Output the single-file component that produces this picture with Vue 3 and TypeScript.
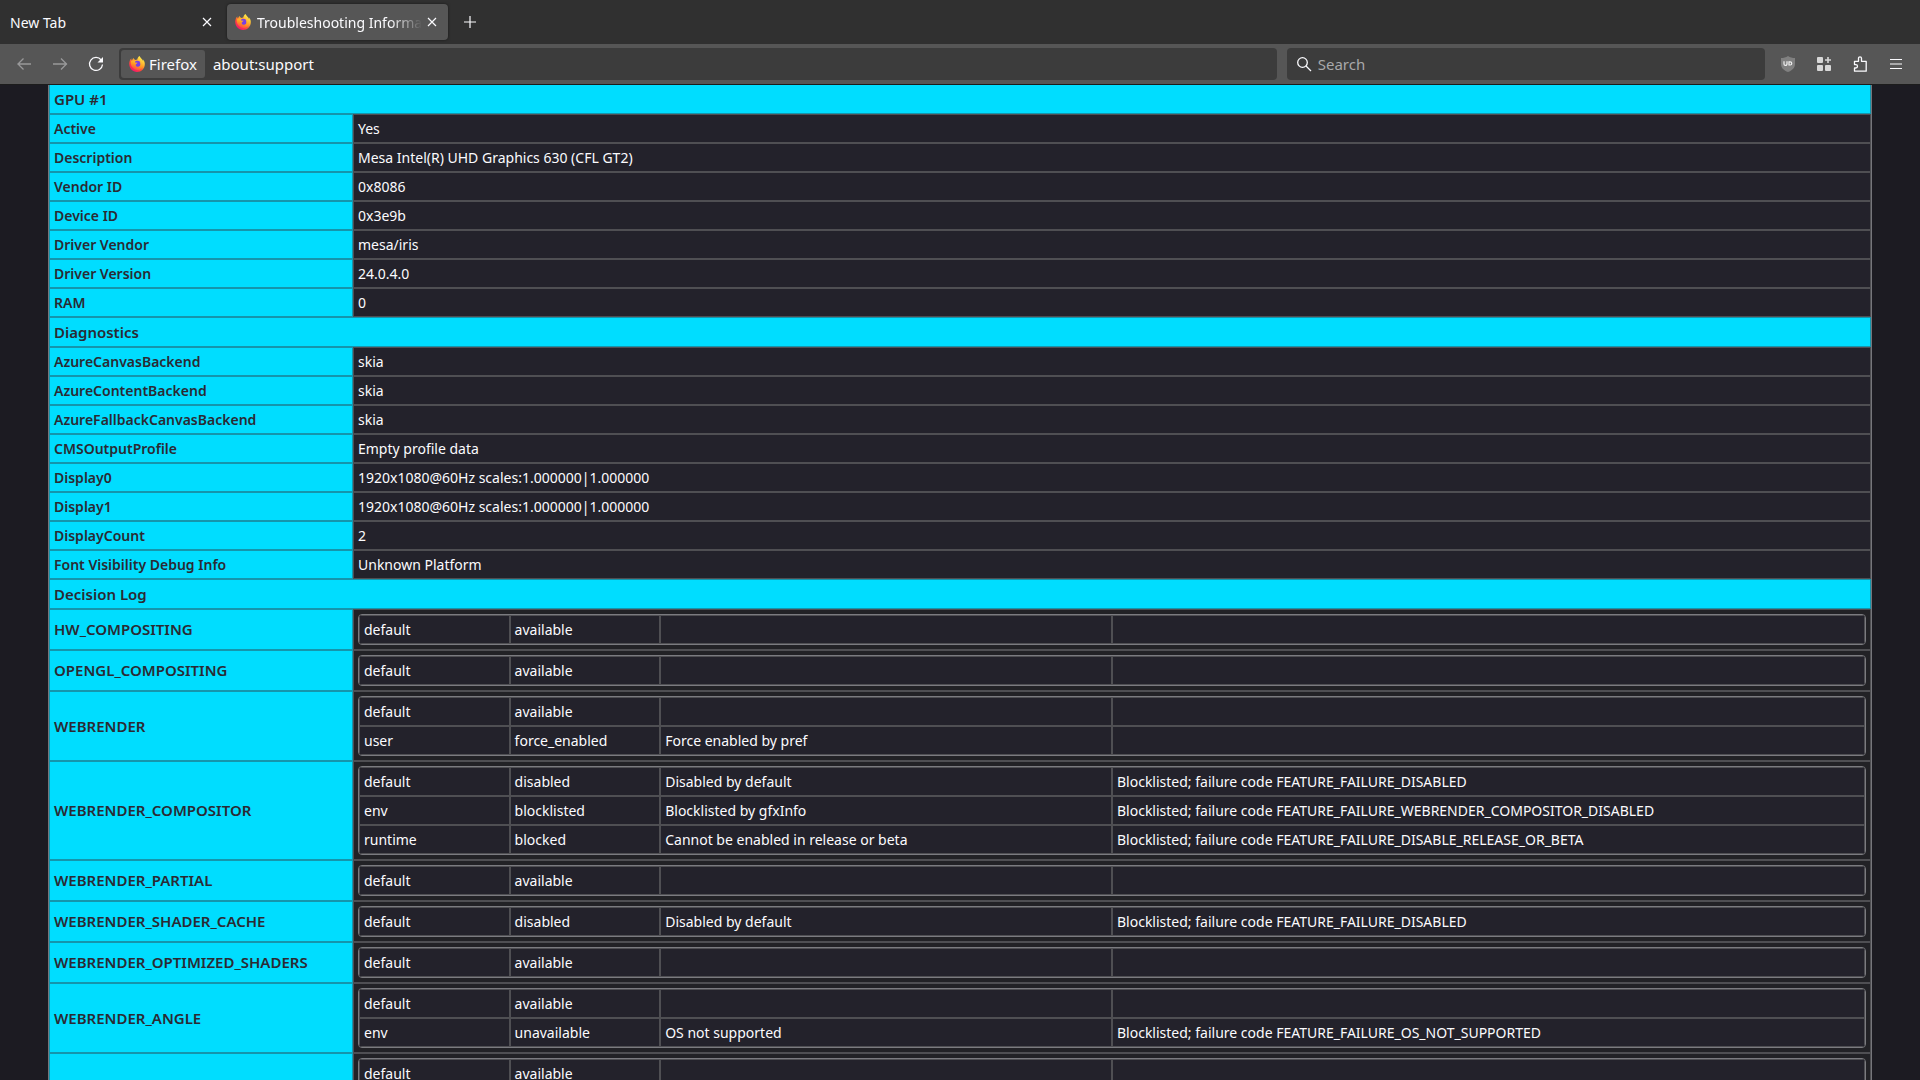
<script setup lang="ts">
type Row = [string, string]
type Entry = [string, string, string, string]
type Decision = { name: string; log: Entry[] }

const gpu: Row[] = [
  ['Active', 'Yes'],
  ['Description', 'Mesa Intel(R) UHD Graphics 630 (CFL GT2)'],
  ['Vendor ID', '0x8086'],
  ['Device ID', '0x3e9b'],
  ['Driver Vendor', 'mesa/iris'],
  ['Driver Version', '24.0.4.0'],
  ['RAM', '0'],
]

const diagnostics: Row[] = [
  ['AzureCanvasBackend', 'skia'],
  ['AzureContentBackend', 'skia'],
  ['AzureFallbackCanvasBackend', 'skia'],
  ['CMSOutputProfile', 'Empty profile data'],
  ['Display0', '1920x1080@60Hz scales:1.000000|1.000000'],
  ['Display1', '1920x1080@60Hz scales:1.000000|1.000000'],
  ['DisplayCount', '2'],
  ['Font Visibility Debug Info', 'Unknown Platform'],
]

const available: Entry = ['default', 'available', '', '']
const disabled: Entry = [
  'default',
  'disabled',
  'Disabled by default',
  'Blocklisted; failure code FEATURE_FAILURE_DISABLED',
]

const decisions: Decision[] = [
  { name: 'HW_COMPOSITING', log: [available] },
  { name: 'OPENGL_COMPOSITING', log: [available] },
  { name: 'WEBRENDER', log: [available, ['user', 'force_enabled', 'Force enabled by pref', '']] },
  {
    name: 'WEBRENDER_COMPOSITOR',
    log: [
      disabled,
      ['env', 'blocklisted', 'Blocklisted by gfxInfo', 'Blocklisted; failure code FEATURE_FAILURE_WEBRENDER_COMPOSITOR_DISABLED'],
      ['runtime', 'blocked', 'Cannot be enabled in release or beta', 'Blocklisted; failure code FEATURE_FAILURE_DISABLE_RELEASE_OR_BETA'],
    ],
  },
  { name: 'WEBRENDER_PARTIAL', log: [available] },
  { name: 'WEBRENDER_SHADER_CACHE', log: [disabled] },
  { name: 'WEBRENDER_OPTIMIZED_SHADERS', log: [available] },
  {
    name: 'WEBRENDER_ANGLE',
    log: [available, ['env', 'unavailable', 'OS not supported', 'Blocklisted; failure code FEATURE_FAILURE_OS_NOT_SUPPORTED']],
  },
  { name: '', log: [available, ['', '', '', ''], ['', '', '', '']] },
]
</script>

<template>
  <div class="window">
    <svg class="defs" width="0" height="0" aria-hidden="true">
      <defs>
        <linearGradient id="flame" x1="0.85" y1="0.1" x2="0.25" y2="0.95">
          <stop offset="0" stop-color="#fff44f" />
          <stop offset="0.35" stop-color="#ffb02e" />
          <stop offset="0.65" stop-color="#ff4f36" />
          <stop offset="1" stop-color="#f5156c" />
        </linearGradient>
        <linearGradient id="tail" x1="0.8" y1="0" x2="0.3" y2="1">
          <stop offset="0" stop-color="#ffd43a" />
          <stop offset="0.5" stop-color="#ff9a1f" />
          <stop offset="1" stop-color="#ff3d4c" />
        </linearGradient>
        <symbol id="firefox" viewBox="0 0 16 16">
          <path fill="url(#flame)" d="M15.3 5.6c-.3-.9-1-1.700-1.600-2 .4.700.6 1.500.700 2C13.400 3.100 11.700 2.300 10.500 0 9 .9 8.400 2.600 8.300 3.500c-.7 0-1.300.2-1.900.5-.9-.3-1.600-1-1.800-1.900-.9.500-1.200 1.300-1.300 1.900-.3 0-.6.1-.9.200 0-.5-.1-1 .1-1.700C1.100 3.200.3 5.600.2 7.600.100 12.200 3.600 16 8 16s7.800-3.500 7.800-8c0-.9-.1-1.700-.5-2.400z" />
          <circle cx="8.200" cy="8" r="3.300" fill="#7a3fe4" />
          <path fill="url(#tail)" d="M1.900 5.200c1.200-1 2.700-.9 3.500-.4.600-.3 1.200-.4 1.900-.3-.9.500-1.300 1.100-1.300 2l2.500.3c-.2 1-1.700 1.100-1.800 1.900-.2 1.500 1.600 2.500 3.200 1.900 2.300-.9 2.200-3.600.5-4.900 2.300.5 3.400 2.500 3.200 4.200-.3 2.600-2.600 4.200-5.200 4C4.300 13.600 1 10 1.900 5.200z" />
        </symbol>
      </defs>
    </svg>

    <nav class="tabs" aria-label="Tabs">
      <div class="tab first">
        <span class="label">New Tab</span>
        <button class="close" aria-label="Close New Tab">
          <svg viewBox="0 0 10 10"><path d="M1 1l8 8M9 1l-8 8" /></svg>
        </button>
      </div>
      <div class="tab selected">
        <svg class="fox"><use href="#firefox" /></svg>
        <span class="label faded">Troubleshooting Information</span>
        <button class="close" aria-label="Close Troubleshooting Information">
          <svg viewBox="0 0 10 10"><path d="M1 1l8 8M9 1l-8 8" /></svg>
        </button>
      </div>
      <button class="add" aria-label="Open a new tab">
        <svg viewBox="0 0 12 12"><path d="M6 0v12M0 6h12" /></svg>
      </button>
    </nav>

    <header class="toolbar">
      <button class="tool dim" aria-label="Back">
        <svg viewBox="0 0 16 16"><path d="M15 8H1.500M7.500 2.500L2 8l5.500 5.500" /></svg>
      </button>
      <button class="tool dim" aria-label="Forward">
        <svg viewBox="0 0 16 16"><path d="M1 8h14M9 2.500L14.500 8 9 13.500" /></svg>
      </button>
      <button class="tool reload" aria-label="Reload">
        <svg viewBox="0 0 16 16">
          <path d="M13.200 4A6.500 6.500 0 1 0 14.500 8.500" />
          <path class="solid" d="M15 1v5.500H9.500z" />
        </svg>
      </button>
      <div class="urlbar">
        <button class="identity"><svg class="fox"><use href="#firefox" /></svg>Firefox</button>
        <input class="url" type="text" value="about:support" aria-label="Address" />
      </div>
      <label class="search">
        <svg viewBox="0 0 16 16"><circle cx="6.500" cy="6.500" r="4.800" /><path d="M10 10l5 5" /></svg>
        <input type="text" placeholder="Search" aria-label="Search" />
      </label>
      <div class="actions">
        <button class="action" aria-label="uBlock Origin">
          <svg viewBox="0 0 16 16">
            <path fill="#808080" d="M8 0c2 1.400 4.500 2 7 2v6c0 4-3 6.500-7 8-4-1.500-7-4-7-8V2c2.500 0 5-.6 7-2z" />
            <path fill="none" stroke="#f0f0f0" stroke-width="1.200" d="M4 5.300v2.600a1.500 1.500 0 0 0 3 0V5.300M9 5.900v3.100h1.200a1.500 1.500 0 0 0 0-3.100z" />
          </svg>
        </button>
        <button class="action" aria-label="Add-ons">
          <svg viewBox="0 0 16 16" fill="#d8d8d8">
            <rect x="1" y="1" width="6" height="6" rx="1" /><rect x="1" y="9" width="6" height="6" rx="1" />
            <rect x="9" y="9" width="6" height="6" rx="1" /><path d="M11.200 1h1.600v2.200H15v1.600h-2.200V7h-1.600V4.800H9V3.200h2.200z" />
          </svg>
        </button>
        <button class="action" aria-label="Extensions">
          <svg viewBox="0 0 16 16">
            <path fill="none" stroke="#fbfbfe" stroke-width="1.300" stroke-linejoin="round" d="M2.500 7V5.300h4V2.300a1.500 1.500 0 0 1 3 0v3h4.700v9.900H2.500v-3.200h1.300a1.700 1.700 0 0 0 0-3.400H2.500z" />
          </svg>
        </button>
        <button class="action" aria-label="Menu">
          <svg viewBox="0 0 16 16"><path fill="none" stroke="#fbfbfe" stroke-width="1.200" d="M2 3.500h12M2 8h12M2 12.500h12" /></svg>
        </button>
      </div>
    </header>

    <main class="page">
      <table class="report">
        <tbody>
          <tr class="top"><th colspan="2" class="section">GPU #1</th></tr>
          <tr v-for="[name, value] in gpu" :key="name">
            <th scope="row">{{ name }}</th>
            <td>{{ value }}</td>
          </tr>
          <tr><th colspan="2" class="section">Diagnostics</th></tr>
          <tr v-for="[name, value] in diagnostics" :key="name">
            <th scope="row">{{ name }}</th>
            <td>{{ value }}</td>
          </tr>
          <tr><th colspan="2" class="section">Decision Log</th></tr>
          <tr v-for="d in decisions" :key="d.name">
            <th scope="row" class="feature">{{ d.name }}</th>
            <td class="holder">
              <table class="log">
                <tbody>
                  <tr v-for="(entry, i) in d.log" :key="i">
                    <td v-for="(cell, j) in entry" :key="j">{{ cell }}</td>
                  </tr>
                </tbody>
              </table>
            </td>
          </tr>
        </tbody>
      </table>
    </main>
  </div>
</template>

<style>
body {
  margin: 0;
  background: #1c1b22;
}
</style>

<style scoped>
.window {
  height: 100vh;
  overflow: hidden;
  display: flex;
  flex-direction: column;
  color: #fbfbfe;
  font-family: "Noto Sans", sans-serif;
  font-size: 14px;
}
.defs {
  position: absolute;
}
button,
input {
  font: inherit;
  color: inherit;
  background: none;
  border: 0;
  padding: 0;
  margin: 0;
  outline: 0;
}
button {
  display: flex;
  align-items: center;
  justify-content: center;
}
.fox {
  width: 16px;
  height: 16px;
  flex: none;
}

.tabs {
  flex: none;
  height: 44px;
  display: flex;
  align-items: center;
  background: #303030;
}
.tab {
  box-sizing: border-box;
  width: 221px;
  height: 36px;
  display: flex;
  align-items: center;
  border-radius: 4px;
  padding: 0 6px 0 8px;
}
.tab.first {
  width: 227px;
  padding: 0 10px;
}
.tab.selected {
  background: #565656;
  box-shadow: 0 0 3px rgba(0, 0, 0, 0.5);
}
.selected .fox {
  margin-right: 6px;
}
.label {
  flex: 1;
  min-width: 0;
  overflow: hidden;
  white-space: nowrap;
}
.faded {
  mask-image: linear-gradient(to left, transparent, #000 32px);
}
.close {
  width: 20px;
  height: 20px;
}
.close svg {
  width: 10px;
  height: 10px;
  stroke: #fbfbfe;
  stroke-width: 1.200;
}
.add {
  width: 44px;
  height: 36px;
}
.add svg {
  width: 12px;
  height: 12px;
  stroke: #fbfbfe;
  stroke-width: 1.200;
}

.toolbar {
  box-sizing: border-box;
  flex: none;
  height: 41px;
  display: flex;
  align-items: center;
  padding: 0 6px;
  font-size: 15px;
  background: #565656;
  border-bottom: 1px solid #1c1c1c;
}
.tool {
  width: 36px;
  height: 32px;
}
.tool svg {
  width: 16px;
  height: 16px;
  fill: none;
  stroke: #fbfbfe;
  stroke-width: 1.300;
}
.tool .solid {
  fill: #fbfbfe;
  stroke: none;
}
.dim {
  opacity: 0.4;
}
.urlbar,
.search {
  box-sizing: border-box;
  height: 32px;
  display: flex;
  align-items: center;
  background: #3c3c3c;
  border-radius: 4px;
}
.urlbar {
  flex: 1153;
  margin-left: 5px;
  padding: 2px;
}
.identity {
  height: 28px;
  gap: 4px;
  padding: 0 8px;
  background: #565656;
  border-radius: 3px;
}
.url {
  flex: 1;
  min-width: 0;
  margin-left: 8px;
}
.search {
  flex: 469;
  margin: 0 5px 0 10px;
  padding-left: 9px;
  gap: 6px;
}
.search svg {
  width: 16px;
  height: 16px;
  fill: none;
  stroke: #fbfbfe;
  stroke-width: 1.300;
}
.search input {
  flex: 1;
  min-width: 0;
}
.search input::placeholder {
  color: #a8a8aa;
  opacity: 1;
}
.actions {
  display: flex;
}
.action {
  width: 36px;
  height: 32px;
}
.action svg {
  width: 16px;
  height: 16px;
}

.page {
  flex: 1;
  min-height: 0;
  overflow: hidden;
  background: #1c1b22;
}
table {
  border-collapse: separate;
  border-spacing: 0;
  table-layout: fixed;
}
th,
td {
  box-sizing: border-box;
  padding: 4px;
  line-height: 19px;
  text-align: left;
  vertical-align: middle;
  border: 1px solid #4f4f53;
  background: #23222b;
}
th {
  width: 304px;
  color: #2b2a33;
  font-weight: 600;
  background: #00ddff;
  border-color: #1595ac;
}
.section,
.feature {
  font-size: 15px;
}
.section {
  line-height: 20px;
}
.report {
  width: 95%;
  margin: 0 auto;
  border: 1px solid #76767b;
  border-width: 0 1px;
  table-layout: auto;
}
.top .section {
  border-top: 0;
}
.holder {
  background: #222226;
}
.log {
  width: 100%;
  border: 1px solid #7b7b80;
  border-radius: 4px;
  overflow: hidden;
}
.log td {
  height: 29px;
}
.log td:nth-child(1),
.log td:nth-child(2) {
  width: 10%;
}
.log td:nth-child(3) {
  width: 30%;
}
.log td:nth-child(4) {
  width: 50%;
}
</style>
